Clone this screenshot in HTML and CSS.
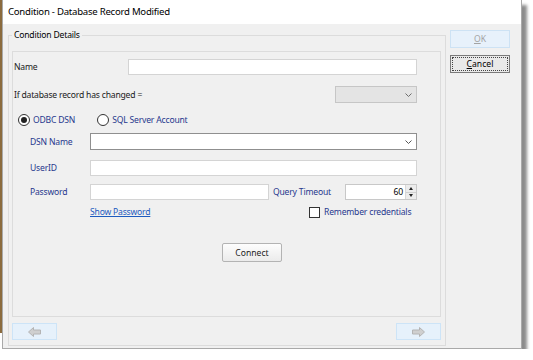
FILE: index.html
```html
<!DOCTYPE html>
<html lang="en">
<head>
  <meta charset="UTF-8" />
  <title>Condition - Database Record Modified</title>
  <link rel="stylesheet" href="styles.css">
</head>
<body>

  <div class="window">
    <div class="titlebar">Condition - Database Record Modified</div>

    <div class="client">
      <fieldset class="group">
        <legend>Condition Details</legend>

        <div class="panel">
          <div class="row row-name">
            <label class="lbl lbl-name">Name</label>
            <input class="text name-input" type="text">
          </div>

          <div class="row row-changed">
            <label class="lbl">If database record has changed =</label>
            <div class="combo combo-disabled">
              <svg class="chev" width="7" height="4" viewBox="0 0 7 4"><path d="M0.5 0.5 L3.5 3.5 L6.5 0.5" fill="none" stroke="#6d6d6d" stroke-width="1"/></svg>
            </div>
          </div>

          <div class="row row-radios">
            <span class="radio checked"></span>
            <span class="opt">ODBC DSN</span>
            <span class="radio radio-sql"></span>
            <span class="opt">SQL Server Account</span>
          </div>

          <div class="row sub row-dsn">
            <label class="lbl navy sub-lbl">DSN Name</label>
            <div class="combo combo-dsn">
              <svg class="chev" width="7" height="4" viewBox="0 0 7 4"><path d="M0.5 0.5 L3.5 3.5 L6.5 0.5" fill="none" stroke="#555" stroke-width="1"/></svg>
            </div>
          </div>

          <div class="row sub row-user">
            <label class="lbl navy sub-lbl">UserID</label>
            <input class="text user-input" type="text">
          </div>

          <div class="row sub row-pass">
            <label class="lbl navy sub-lbl">Password</label>
            <input class="text pass-input" type="password">
            <label class="lbl navy timeout-lbl">Query Timeout</label>
            <div class="spin">
              <span class="spin-value">60</span>
              <span class="spin-btns">
                <span class="spin-up"></span>
                <span class="spin-down"></span>
              </span>
            </div>
          </div>

          <div class="row row-extra">
            <a class="link" href="#">Show Password</a>
            <span class="check-wrap">
              <span class="check"></span>
              <span class="navy">Remember credentials</span>
            </span>
          </div>

          <div class="row row-connect">
            <button class="btn-connect">Connect</button>
          </div>
        </div>

        <div class="nav">
          <button class="nav-btn">
            <svg width="13" height="10" viewBox="0 0 13 10"><path d="M0.5 5 L5.5 0.5 L5.5 3 L12.5 3 L12.5 7 L5.5 7 L5.5 9.5 Z" fill="#cfcfcf" stroke="#b4b4b4" stroke-width="1"/></svg>
          </button>
          <button class="nav-btn">
            <svg width="13" height="10" viewBox="0 0 13 10"><path d="M12.5 5 L7.5 0.5 L7.5 3 L0.5 3 L0.5 7 L7.5 7 L7.5 9.5 Z" fill="#cfcfcf" stroke="#b4b4b4" stroke-width="1"/></svg>
          </button>
        </div>
      </fieldset>

      <div class="side">
        <button class="btn btn-ok" disabled><u>O</u>K</button>
        <button class="btn btn-cancel"><span class="focus"><u>C</u>ancel</span></button>
      </div>
    </div>
  </div>

</body>
</html>
```

FILE: styles.css
```css
* {
  box-sizing: border-box;
}

body {
  margin: 0;
  background: linear-gradient(#8b6b3e, #8b6b3e) 0 0 / 2px 333px no-repeat, #fff;
  font-family: 'Noto Sans', 'DejaVu Sans', sans-serif;
  font-size: 8.6px;
  letter-spacing: -0.2px;
  color: #1a1a1a;
}

.window {
  margin-left: 2px;
  width: 520px;
  height: 349px;
  background: #f0f0f0;
  border: 1px solid #a9a9a9;
  border-top: none;
  box-shadow: 5px 5px 3px rgba(0, 0, 0, 0.45);
  display: flex;
  flex-direction: column;
}

.titlebar {
  height: 24px;
  background: #fff;
  padding-left: 5px;
  line-height: 24px;
  font-size: 9.6px;
  letter-spacing: -0.25px;
  color: #000;
}

.client {
  display: flex;
  gap: 4px;
  padding: 5px 0 0 5px;
}

/* group box */
.group {
  margin: 0;
  width: 438px;
  height: 317px;
  border: 1px solid #dcdcdc;
  padding: 10px 4px 5px 3px;
  display: flex;
  flex-direction: column;
  min-inline-size: 0;
}

.group legend {
  padding: 0 2px;
  line-height: 12px;
  color: #000;
}

.panel {
  flex: 1;
  border: 1px solid #dcdcdc;
  padding: 7px 23px 0 1px;
}

.row {
  display: flex;
  align-items: center;
}

.lbl {
  white-space: nowrap;
}

.navy {
  color: #27388e;
}

.text {
  font: inherit;
  background: #fff;
  border: 1px solid #d4d4d4;
  padding: 0 3px;
  outline: none;
}

.row-name {
  height: 16px;
}

.lbl-name {
  width: 114px;
}

.name-input {
  flex: 1;
  height: 16px;
}

.row-changed {
  margin-top: 11px;
  height: 17px;
  justify-content: space-between;
}

.combo {
  height: 17px;
  display: flex;
  align-items: center;
  justify-content: flex-end;
  padding-right: 4px;
}

.combo-disabled {
  width: 82px;
  background: #e4e4e4;
  border: 1px solid #c6c6c6;
}

.combo-dsn {
  flex: 1;
  background: #fff;
  border: 1px solid #8f8f8f;
}

/* radios */
.row-radios {
  margin-top: 10px;
  height: 13px;
  padding-left: 4px;
}

.radio {
  width: 12px;
  height: 12px;
  border: 1px solid #333;
  border-radius: 50%;
  background: #fff;
  display: flex;
  align-items: center;
  justify-content: center;
}

.radio.checked::after {
  content: "";
  width: 6px;
  height: 6px;
  border-radius: 50%;
  background: #222;
}

.radio-sql {
  margin-left: 22px;
}

.opt {
  margin-left: 3px;
  color: #27388e;
}

/* sub rows under the radios */
.sub {
  padding-left: 16px;
}

.sub-lbl {
  width: 60px;
}

.row-dsn {
  margin-top: 7px;
  height: 17px;
}

.row-user {
  margin-top: 10px;
  height: 16px;
}

.user-input {
  flex: 1;
  height: 16px;
}

.row-pass {
  margin-top: 8px;
  height: 16px;
}

.pass-input {
  width: 179px;
  height: 16px;
}

.timeout-lbl {
  width: 76px;
  padding-left: 4px;
}

.spin {
  flex: 1;
  height: 16px;
  background: #fff;
  border: 1px solid #c8c8c8;
  display: flex;
  justify-content: flex-end;
}

.spin-value {
  line-height: 14px;
  padding-right: 2px;
  color: #000;
}

.spin-btns {
  width: 11px;
  display: flex;
  flex-direction: column;
  border-left: 1px solid #d8d8d8;
  background: #ececec;
}

.spin-up,
.spin-down {
  flex: 1;
  display: flex;
  align-items: center;
  justify-content: center;
}

.spin-up {
  border-bottom: 1px solid #d0d0d0;
}

.spin-up::after {
  content: "";
  border: 2.5px solid transparent;
  border-bottom: 3px solid #222;
  border-top: none;
}

.spin-down::after {
  content: "";
  border: 2.5px solid transparent;
  border-top: 3px solid #222;
  border-bottom: none;
}

.row-extra {
  margin-top: 6px;
  height: 12px;
  padding-left: 76px;
  display: grid;
  grid-template-columns: 219px auto;
  align-items: center;
  white-space: nowrap;
}

.link {
  color: #1d5bbf;
  text-decoration: underline;
}

.check-wrap {
  display: flex;
  align-items: center;
}

.check {
  width: 11px;
  height: 11px;
  border: 1px solid #333;
  background: #fff;
  margin-right: 4px;
}

.row-connect {
  margin-top: 25px;
}

.btn-connect {
  margin-left: 208px;
  width: 60px;
  height: 19px;
  font: inherit;
  color: #222;
  background: linear-gradient(#fdfdfd, #ebebeb);
  border: 1px solid #b3b3b3;
  border-radius: 2px;
  padding: 0;
}

/* back / next */
.nav {
  display: flex;
  justify-content: space-between;
  margin-top: 6px;
}

.nav-btn {
  width: 45px;
  height: 17px;
  background: #e6f1fb;
  border: 1px solid #cde4f7;
  padding: 0;
  display: flex;
  align-items: center;
  justify-content: center;
}

/* right side buttons */
.side {
  display: flex;
  flex-direction: column;
  gap: 7px;
  padding-top: 1px;
}

.btn {
  width: 60px;
  height: 18px;
  font: inherit;
  padding: 0;
}

.btn-ok {
  background: #e7f1fb;
  border: 1px solid #cde2f4;
  color: #a3a3a3;
}

.btn-cancel {
  background: #e9e9e9;
  border: 1px solid #7a7a7a;
  color: #000;
  padding: 1px;
}

.btn-cancel .focus {
  display: block;
  height: 100%;
  line-height: 12px;
  border: 1px dotted #444;
}
```
